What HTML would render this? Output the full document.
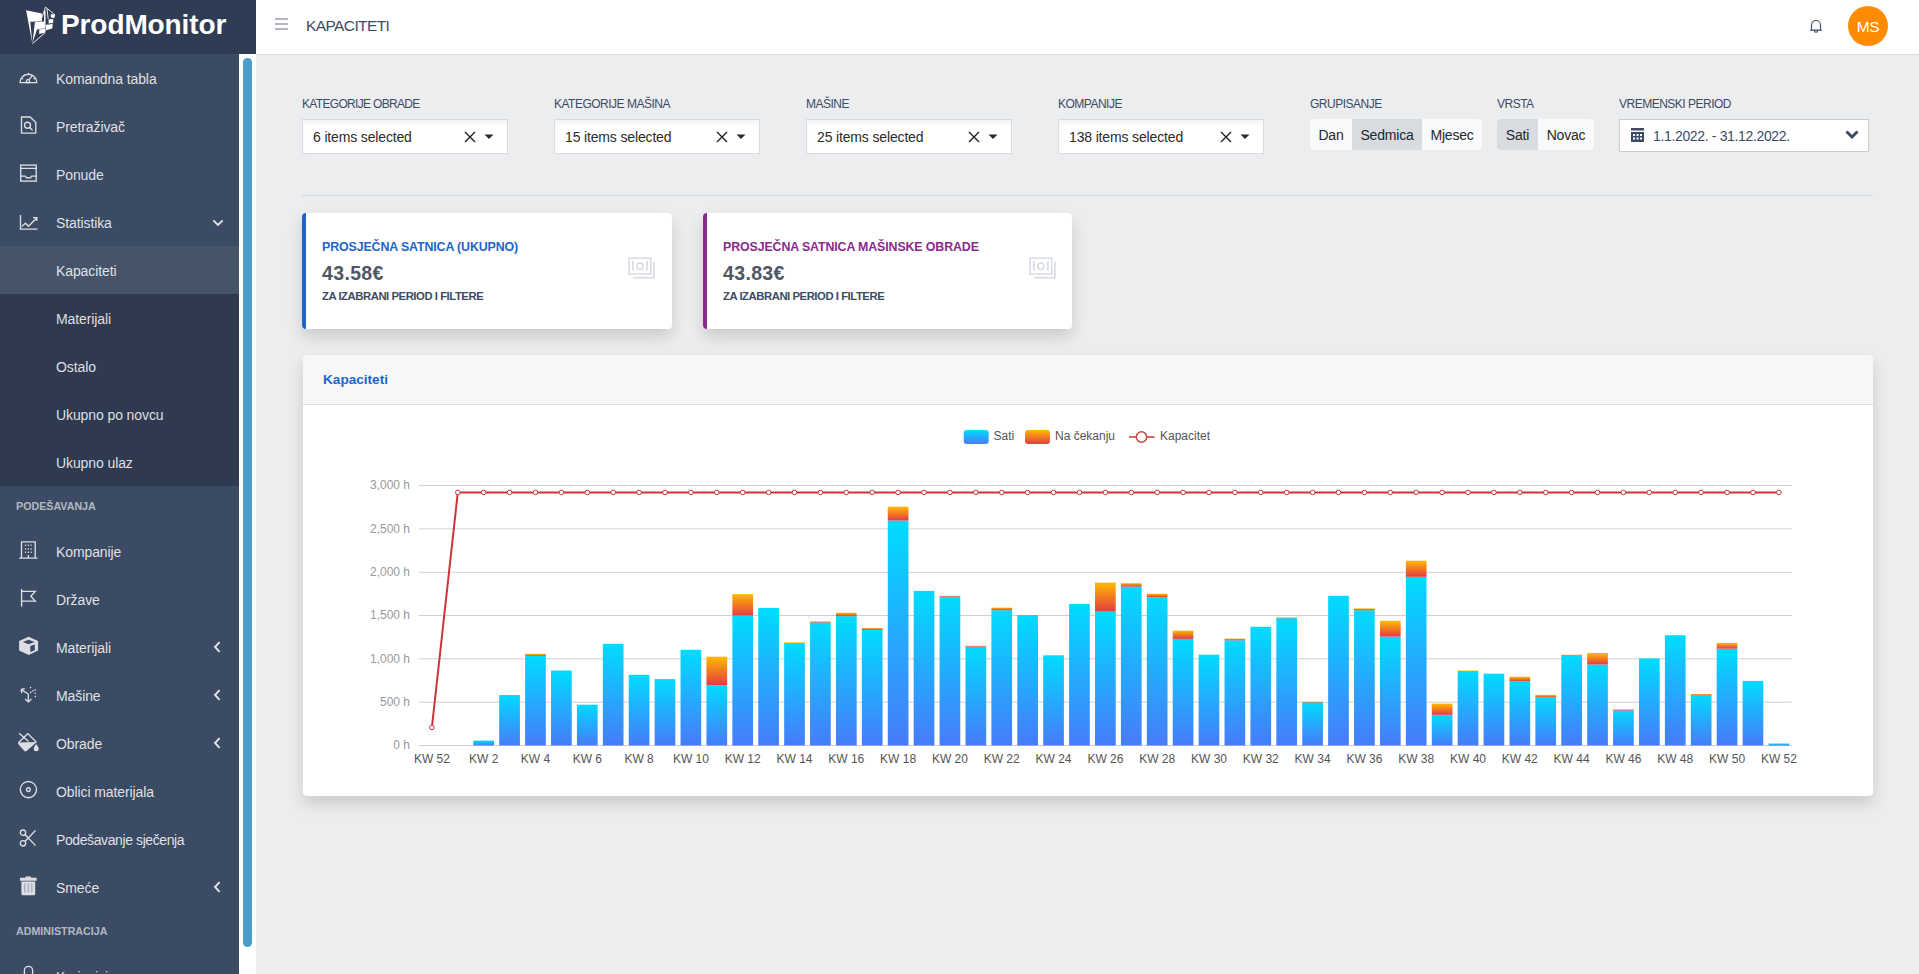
<!DOCTYPE html>
<html><head><meta charset="utf-8"><title>Kapaciteti</title>
<style>
*{box-sizing:border-box;margin:0;padding:0}
html,body{width:1919px;height:974px;overflow:hidden;background:#ebedef;font-family:"Liberation Sans", sans-serif;color:#3c4b64}
.abs{position:absolute}
#brand{position:absolute;left:0;top:0;width:256px;height:54px;background:#303c54}
#brand .name{position:absolute;left:61px;top:5px;font-size:28px;font-weight:bold;color:#fff;letter-spacing:-0.1px;line-height:40px}
#header{position:absolute;left:256px;top:0;width:1663px;height:55px;background:#fff;border-bottom:1px solid #d8dbe0}
#sidebar{position:absolute;left:0;top:54px;width:239px;height:920px;background:#3c4b64;overflow:hidden}
#sidebar .it{position:absolute;left:0;width:239px;height:48px}
#sidebar .it.act{background:#465469}
#sidebar .tx{position:absolute;left:56px;top:17px;font-size:14px;line-height:16px;color:rgba(255,255,255,.85);letter-spacing:-0.1px;white-space:nowrap}
#sidebar .ico{position:absolute;left:16px;top:12px;width:24px;height:22px}
#sidebar .ico svg{display:block}
#sidebar .chl{position:absolute;left:213px;top:18px}
#sidebar .chd{position:absolute;left:212px;top:20.5px}
#sidebar .ttl{position:absolute;left:16px;height:41px;font-size:10.7px;font-weight:bold;color:rgba(255,255,255,.62);line-height:12px;padding-top:14px}
#sbtrack{position:absolute;left:239px;top:54px;width:17px;height:920px;background:#fff}
#sbthumb{position:absolute;left:243px;top:58px;width:9px;height:889px;border-radius:5px;background:#4a9dc9}
.lbl{position:absolute;top:97px;font-size:12px;line-height:14px;letter-spacing:-0.5px;color:#3c4b64;white-space:nowrap}
.sel{position:absolute;top:119px;width:206px;height:35px;background:#fff;border:1px solid #d8dbe0;box-shadow:inset 0 4px 4px -1px rgba(0,0,0,.05)}
.stx{position:absolute;left:10px;top:9px;font-size:14px;line-height:16px;color:#2b2b2b;letter-spacing:-0.15px;white-space:nowrap}
.xic{position:absolute;left:161px;top:11px}
.car{position:absolute;left:181px;top:14px}
.bg{position:absolute;top:119px;height:31px;background:#f9fafb;border-radius:4px;overflow:hidden}
.bg span{position:absolute;top:0;height:31px;line-height:33px;font-size:14px;color:#23282c;text-align:center;letter-spacing:-0.2px}
.bg span.on{background:#d8dbe0}
.card{position:absolute;top:213px;width:370px;height:116px;background:#fff;border-radius:4px;box-shadow:0 8px 16px rgba(0,0,0,.15)}
.card .bar{position:absolute;left:0;top:0;width:4px;height:116px;border-radius:4px 0 0 4px}
.card .t{position:absolute;left:20px;top:27px;font-size:12.4px;font-weight:bold;line-height:14px;letter-spacing:-0.12px;white-space:nowrap}
.card .v{position:absolute;left:20px;top:49px;font-size:19.5px;font-weight:bold;line-height:22px;color:#4f5664;letter-spacing:0.35px;white-space:nowrap}
.card .s{position:absolute;left:20px;top:76px;font-size:11.3px;font-weight:bold;line-height:14px;color:#3c4b64;letter-spacing:-0.45px;white-space:nowrap}
.card .m{position:absolute;left:326px;top:44px}
#chartcard{position:absolute;left:303px;top:355px;width:1570px;height:441px;background:#fff;border-radius:4px;box-shadow:0 8px 16px rgba(0,0,0,.15);overflow:hidden}
#chartcard .hd{position:absolute;left:0;top:0;width:1570px;height:50px;background:#f7f7f7;border-bottom:1px solid #d8dbe0}
#chartcard .hd span{position:absolute;left:20px;top:17px;font-size:13.6px;font-weight:bold;color:#1d65c8;line-height:16px}
#chartcard .body{position:absolute;left:0;top:49px;width:1570px;height:392px}
svg text{font-family:"Liberation Sans", sans-serif}
</style></head><body>
<div id="brand">
<svg class="abs" style="left:22px;top:4px" width="36" height="44" viewBox="0 0 36 44">
<g fill="#fff">
<path d="M4.1 6.3 L19.9 9.5 L19.9 17.2 L8.3 17.8 L10.4 39.7 Z"/>
<path d="M12.9 18 L22.6 17.6 L22.6 24.2 L15 25.6 L10.6 38.5 Z"/>
<path d="M17.2 25.6 L23.5 24.6 L23.5 28.6 L17.2 30 Z"/>
<path d="M23.9 20.8 L30.7 19.9 L30.3 24.4 L23.9 26.2 Z"/>
<path d="M26.6 15.4 L31.2 14.9 L31.2 19 L26.6 19.4 Z"/>
<path d="M28.9 9.9 L33 10.8 L32.5 14 L28.9 13.5 Z"/>
<path d="M22.1 6.8 L23.5 6.8 L23.5 24.2 L22.1 24.2 Z"/>
</g>
<path d="M19.9 13.5 L23.5 3.2 L33 10.8 M25 5 L26.2 15 M23 28.8 L10.4 39.7" stroke="#fff" stroke-width="0.9" fill="none"/>
</svg>
<div class="name">ProdMonitor</div>
</div>
<div id="header">
<svg class="abs" style="left:19px;top:18px" width="13" height="13" viewBox="0 0 13 13"><path d="M0 1 H13 M0 6 H13 M0 11 H13" stroke="#b4b6c4" stroke-width="2"/></svg>
<div class="abs" style="left:50px;top:17px;font-size:15.5px;line-height:18px;letter-spacing:-0.6px;color:#3c4b64">KAPACITETI</div>
<svg class="abs" style="left:1553px;top:18px" width="14" height="16" viewBox="0 0 14 16"><path d="M2.5 12 V7 A4.5 4.5 0 0 1 11.5 7 V12 Z M1 12.3 H13" fill="none" stroke="#3c4b64" stroke-width="1.1"/><path d="M5.3 12.5 A1.7 1.7 0 0 0 8.7 12.5" fill="none" stroke="#3c4b64" stroke-width="1.1"/></svg>
<div class="abs" style="left:1592px;top:6px;width:40px;height:40px;border-radius:50%;background:#ff8c00;color:#fff;font-size:15.5px;line-height:42px;text-align:center;letter-spacing:-0.3px">MS</div>
</div>
<div id="sidebar">
<div style="position:absolute;left:0;top:-54px;width:239px;height:974px">
<div class="it" style="top:54px"><span class="ico"><svg width="24" height="22" viewBox="0 0 24 22"><path d="M4 16.6 A8.4 8.4 0 1 1 20.8 16.6 Z" fill="none" stroke="rgba(255,255,255,.82)" stroke-width="1.35" stroke-linejoin="round"/><circle cx="11.9" cy="15.2" r="1.6" fill="none" stroke="rgba(255,255,255,.82)" stroke-width="1.35"/><path d="M12.8 13.9 L16.2 9.6" fill="none" stroke="rgba(255,255,255,.82)" stroke-width="1.35"/><g fill="rgba(255,255,255,.82)"><circle cx="6.6" cy="12.8" r=".75"/><circle cx="8.2" cy="9.3" r=".75"/><circle cx="12.4" cy="7.5" r=".75"/><circle cx="18.2" cy="12.8" r=".75"/></g></svg></span><span class="tx">Komandna tabla</span></div>
<div class="it" style="top:102px"><span class="ico"><svg width="24" height="22" viewBox="0 0 24 22"><path d="M5.5 3 H14.2 L19.8 8.6 V19.1 H5.5 Z" fill="none" stroke="rgba(255,255,255,.82)" stroke-width="1.35" stroke-linejoin="round"/><circle cx="11.5" cy="11.2" r="3" fill="none" stroke="rgba(255,255,255,.82)" stroke-width="1.35"/><path d="M13.7 13.4 L16.6 16.3" fill="none" stroke="rgba(255,255,255,.82)" stroke-width="1.35"/></svg></span><span class="tx">Pretraživač</span></div>
<div class="it" style="top:150px"><span class="ico"><svg width="24" height="22" viewBox="0 0 24 22"><rect x="4.7" y="3.1" width="15.5" height="16" fill="none" stroke="rgba(255,255,255,.82)" stroke-width="1.35"/><path d="M4.7 6.3 H20.2 M4.7 14.1 H9.2 L10.4 15.7 H14.5 L15.7 14.1 H20.2" fill="none" stroke="rgba(255,255,255,.82)" stroke-width="1.35"/></svg></span><span class="tx">Ponude</span></div>
<div class="it" style="top:198px"><span class="ico"><svg width="24" height="22" viewBox="0 0 24 22"><path d="M4.5 5.1 V19.1 H21.5" fill="none" stroke="rgba(255,255,255,.82)" stroke-width="1.35"/><path d="M5.8 16.4 L9.4 13.2 L12.5 16.3 L20.4 8.3 M17 7.6 H20.8 V11.1" fill="none" stroke="rgba(255,255,255,.82)" stroke-width="1.35"/></svg></span><span class="tx">Statistika</span><svg class="chd" width="12" height="8" viewBox="0 0 12 8"><path d="M1.3 1.3 L6 6 L10.7 1.3" fill="none" stroke="rgba(255,255,255,.85)" stroke-width="1.9"/></svg></div>
<div style="position:absolute;left:0;top:246px;width:239px;height:240px;background:#2f3a50"></div>
<div class="it act" style="top:246px"><span class="tx">Kapaciteti</span></div>
<div class="it" style="top:294px"><span class="tx">Materijali</span></div>
<div class="it" style="top:342px"><span class="tx">Ostalo</span></div>
<div class="it" style="top:390px"><span class="tx">Ukupno po novcu</span></div>
<div class="it" style="top:438px"><span class="tx">Ukupno ulaz</span></div>
<div class="ttl" style="top:486px">PODEŠAVANJA</div>
<div class="it" style="top:527px"><span class="ico"><svg width="24" height="22" viewBox="0 0 24 22"><path d="M5.5 19 V2.8 H19.2 V19 M3.1 19.1 H21.5" fill="none" stroke="rgba(255,255,255,.82)" stroke-width="1.35"/><g fill="rgba(255,255,255,.82)"><rect x="8.9" y="5.6" width="1.3" height="1.3"/><rect x="11.7" y="5.6" width="1.3" height="1.3"/><rect x="14.5" y="5.6" width="1.3" height="1.3"/><rect x="8.9" y="9.3" width="1.3" height="1.3"/><rect x="11.7" y="9.3" width="1.3" height="1.3"/><rect x="14.5" y="9.3" width="1.3" height="1.3"/><rect x="8.9" y="12.6" width="1.3" height="1.3"/><rect x="11.7" y="12.6" width="1.3" height="1.3"/><rect x="14.5" y="12.6" width="1.3" height="1.3"/><rect x="11.7" y="16" width="1.3" height="3"/></g></svg></span><span class="tx">Kompanije</span></div>
<div class="it" style="top:575px"><span class="ico"><svg width="24" height="22" viewBox="0 0 24 22"><path d="M5.6 2.1 V19.6" fill="none" stroke="rgba(255,255,255,.82)" stroke-width="1.35"/><path d="M5.6 4.4 H19.3 L14.8 9.3 L19.3 14.1 H5.6" fill="none" stroke="rgba(255,255,255,.82)" stroke-width="1.35"/></svg></span><span class="tx">Države</span></div>
<div class="it" style="top:623px"><span class="ico"><svg width="24" height="22" viewBox="0 0 24 22"><path d="M12.6 1.8 L22.1 6 V15.6 L12.6 20 L3.1 15.6 V6 Z" fill="rgba(255,255,255,.82)"/><path d="M12.6 4.8 L18.6 7.1 L12.6 9.2 L6.8 7.1 Z" fill="#3c4b64"/><path d="M14.3 11 L18.8 9.6 V15.3 L14.3 17 Z" fill="#3c4b64"/></svg></span><span class="tx">Materijali</span><svg class="chl" width="8" height="12" viewBox="0 0 8 12"><path d="M6.6 1.2 L2 6 L6.6 10.8" fill="none" stroke="rgba(255,255,255,.85)" stroke-width="1.9"/></svg></div>
<div class="it" style="top:671px"><span class="ico"><svg width="24" height="22" viewBox="0 0 24 22"><path d="M12.3 11 L5.3 6.6 M5 6.5 L8.8 5.6 M5 6.5 L5.9 10.2 M12.3 11 V18.6 M9.2 16.1 L12.3 18.9 L15.4 16.1" fill="none" stroke="rgba(255,255,255,.82)" stroke-width="1.35"/><g fill="rgba(255,255,255,.82)"><circle cx="14.8" cy="9.4" r=".8"/><circle cx="16.9" cy="7.9" r=".8"/><circle cx="14.6" cy="4.6" r=".8"/><circle cx="19.1" cy="6.9" r=".8"/><circle cx="19.3" cy="10.3" r=".8"/><circle cx="19.3" cy="13.6" r=".8"/></g></svg></span><span class="tx">Mašine</span><svg class="chl" width="8" height="12" viewBox="0 0 8 12"><path d="M6.6 1.2 L2 6 L6.6 10.8" fill="none" stroke="rgba(255,255,255,.85)" stroke-width="1.9"/></svg></div>
<div class="it" style="top:719px"><span class="ico"><svg width="24" height="22" viewBox="0 0 24 22"><path d="M3.1 2.3 L12.6 10.4" fill="none" stroke="rgba(255,255,255,.82)" stroke-width="1.35" stroke-width="1.7"/><path d="M2.6 11.4 L11.9 2.6 L20.4 11.2" fill="none" stroke="rgba(255,255,255,.82)" stroke-width="1.35" stroke-width="1.7" stroke-linejoin="round"/><path d="M2.2 11.6 L20.8 11.1 L10.6 20 Q9.5 20.9 8.4 20 L2.6 13.6 Q1.6 12.5 2.2 11.6 Z" fill="rgba(255,255,255,.82)"/><path d="M20.2 12.9 Q22.7 15.9 22.7 17.7 A2.5 2.5 0 0 1 17.7 17.7 Q17.7 15.9 20.2 12.9 Z" fill="rgba(255,255,255,.82)"/></svg></span><span class="tx">Obrade</span><svg class="chl" width="8" height="12" viewBox="0 0 8 12"><path d="M6.6 1.2 L2 6 L6.6 10.8" fill="none" stroke="rgba(255,255,255,.85)" stroke-width="1.9"/></svg></div>
<div class="it" style="top:767px"><span class="ico"><svg width="24" height="22" viewBox="0 0 24 22"><circle cx="12.4" cy="10.6" r="8.1" fill="none" stroke="rgba(255,255,255,.82)" stroke-width="1.35"/><circle cx="12.4" cy="10.6" r="1.9" fill="none" stroke="rgba(255,255,255,.82)" stroke-width="1.35"/></svg></span><span class="tx">Oblici materijala</span></div>
<div class="it" style="top:815px"><span class="ico"><svg width="24" height="22" viewBox="0 0 24 22"><circle cx="7" cy="5.7" r="2.7" fill="none" stroke="rgba(255,255,255,.82)" stroke-width="1.35"/><circle cx="7" cy="16.3" r="2.7" fill="none" stroke="rgba(255,255,255,.82)" stroke-width="1.35"/><path d="M9.2 7.7 L19.6 18.6 M9.2 14.3 L19.6 3.4" fill="none" stroke="rgba(255,255,255,.82)" stroke-width="1.35"/></svg></span><span class="tx" style="letter-spacing:-0.4px">Podešavanje sječenja</span></div>
<div class="it" style="top:863px"><span class="ico"><svg width="24" height="22" viewBox="0 0 24 22"><path d="M4 2.8 H20.6 V5.8 H4 Z M9.5 1.6 H15 V3 H9.5 Z" fill="rgba(255,255,255,.82)"/><path d="M5.4 6.6 H19.2 V18.8 Q19.2 20.3 17.7 20.3 H6.9 Q5.4 20.3 5.4 18.8 Z" fill="rgba(255,255,255,.82)"/><path d="M8.7 8.6 V17.6 M12.3 8.6 V17.6 M15.8 8.6 V17.6" stroke="#9da3b4" stroke-width="1.1"/></svg></span><span class="tx">Smeće</span><svg class="chl" width="8" height="12" viewBox="0 0 8 12"><path d="M6.6 1.2 L2 6 L6.6 10.8" fill="none" stroke="rgba(255,255,255,.85)" stroke-width="1.9"/></svg></div>
<div class="ttl" style="top:911px">ADMINISTRACIJA</div>
<div class="it" style="top:952px"><span class="ico"><svg width="24" height="22" viewBox="0 0 24 22"><path d="M8.4 22 V6.4 A4.1 4.1 0 0 1 16.6 6.4 V22" fill="none" stroke="rgba(255,255,255,.82)" stroke-width="1.35" stroke-width="1.6"/></svg></span><span class="tx">Korisnici</span></div>
</div>
</div>
<div id="sbtrack"></div><div id="sbthumb"></div>

<div class="lbl" style="left:302px;letter-spacing:-0.68px">KATEGORIJE OBRADE</div>
<div class="sel" style="left:302px"><span class="stx">6 items selected</span>
<svg class="xic" width="12" height="12" viewBox="0 0 12 12"><path d="M1 1 L11 11 M11 1 L1 11" stroke="#1f1f1f" stroke-width="1.4"/></svg>
<svg class="car" width="10" height="6" viewBox="0 0 10 6"><path d="M0.5 0.5 H9.5 L5 5 Z" fill="#2a2a2a"/></svg></div>
<div class="lbl" style="left:554px">KATEGORIJE MAŠINA</div>
<div class="sel" style="left:554px"><span class="stx">15 items selected</span>
<svg class="xic" width="12" height="12" viewBox="0 0 12 12"><path d="M1 1 L11 11 M11 1 L1 11" stroke="#1f1f1f" stroke-width="1.4"/></svg>
<svg class="car" width="10" height="6" viewBox="0 0 10 6"><path d="M0.5 0.5 H9.5 L5 5 Z" fill="#2a2a2a"/></svg></div>
<div class="lbl" style="left:806px">MAŠINE</div>
<div class="sel" style="left:806px"><span class="stx">25 items selected</span>
<svg class="xic" width="12" height="12" viewBox="0 0 12 12"><path d="M1 1 L11 11 M11 1 L1 11" stroke="#1f1f1f" stroke-width="1.4"/></svg>
<svg class="car" width="10" height="6" viewBox="0 0 10 6"><path d="M0.5 0.5 H9.5 L5 5 Z" fill="#2a2a2a"/></svg></div>
<div class="lbl" style="left:1058px">KOMPANIJE</div>
<div class="sel" style="left:1058px"><span class="stx">138 items selected</span>
<svg class="xic" width="12" height="12" viewBox="0 0 12 12"><path d="M1 1 L11 11 M11 1 L1 11" stroke="#1f1f1f" stroke-width="1.4"/></svg>
<svg class="car" width="10" height="6" viewBox="0 0 10 6"><path d="M0.5 0.5 H9.5 L5 5 Z" fill="#2a2a2a"/></svg></div>
<div class="lbl" style="left:1310px">GRUPISANJE</div>
<div class="bg" style="left:1310px;width:172px"><span style="left:0;width:42px">Dan</span><span class="on" style="left:42px;width:70px">Sedmica</span><span style="left:112px;width:60px">Mjesec</span></div>
<div class="lbl" style="left:1497px">VRSTA</div>
<div class="bg" style="left:1497px;width:97px"><span class="on" style="left:0;width:41px">Sati</span><span style="left:41px;width:56px">Novac</span></div>
<div class="lbl" style="left:1619px">VREMENSKI PERIOD</div>
<div class="abs" style="left:1619px;top:119px;width:250px;height:33px;background:#fff;border:1px solid #c8cbd0">
<svg class="abs" style="left:11px;top:8px" width="13" height="15" viewBox="0 0 13 15"><rect x="0" y="0" width="13" height="2.5" fill="#3c4b64"/><rect x="0" y="4" width="13" height="10" fill="#3c4b64"/><g fill="#fff"><rect x="2" y="6" width="2" height="2"/><rect x="5.5" y="6" width="2" height="2"/><rect x="9" y="6" width="2" height="2"/><rect x="2" y="9.5" width="2" height="2"/><rect x="5.5" y="9.5" width="2" height="2"/><rect x="9" y="9.5" width="2" height="2"/></g></svg>
<span class="abs" style="left:33px;top:8px;font-size:14px;line-height:16px;color:#3c4b64;letter-spacing:-0.35px;white-space:nowrap">1.1.2022. - 31.12.2022.</span>
<svg class="abs" style="left:225px;top:10px" width="14" height="10" viewBox="0 0 14 10"><path d="M1.5 1.5 L7 7 L12.5 1.5" fill="none" stroke="#3c4b64" stroke-width="3"/></svg>
</div>
<div class="abs" style="left:302px;top:195px;width:1571px;height:1px;background:#d3d6da"></div>

<div class="card" style="left:302px"><div class="bar" style="background:#1d65c8"></div>
<div class="t" style="color:#1d65c8">PROSJEČNA SATNICA (UKUPNO)</div><div class="v">43.58€</div><div class="s">ZA IZABRANI PERIOD I FILTERE</div><div class="m"><svg width="28" height="23" viewBox="0 0 28 23"><g fill="none" stroke="#d9dce6" stroke-width="1.6"><rect x="1.1" y="1.2" width="21.7" height="15.8"/><circle cx="11.9" cy="9.2" r="3.2"/><path d="M4.9 4 V13.8 M18.9 4 V13.8 M25.9 4.9 V20.7 H4.9" stroke-width="1.8"/></g></svg></div></div>
<div class="card" style="left:703px;width:369px"><div class="bar" style="background:#8a2a8c"></div>
<div class="t" style="color:#8a2a8c">PROSJEČNA SATNICA MAŠINSKE OBRADE</div><div class="v">43.83€</div><div class="s">ZA IZABRANI PERIOD I FILTERE</div><div class="m"><svg width="28" height="23" viewBox="0 0 28 23"><g fill="none" stroke="#d9dce6" stroke-width="1.6"><rect x="1.1" y="1.2" width="21.7" height="15.8"/><circle cx="11.9" cy="9.2" r="3.2"/><path d="M4.9 4 V13.8 M18.9 4 V13.8 M25.9 4.9 V20.7 H4.9" stroke-width="1.8"/></g></svg></div></div>

<div id="chartcard"><div class="hd"><span>Kapaciteti</span></div><div class="body">
<svg width="1570" height="392" viewBox="0 0 1570 392" style="position:absolute;left:0;top:0">
<defs><linearGradient id="gb" x1="0" y1="0" x2="0" y2="1"><stop offset="0" stop-color="#00dcff"/><stop offset="1" stop-color="#477bfa"/></linearGradient><linearGradient id="go" x1="0" y1="0" x2="0" y2="1"><stop offset="0" stop-color="#ffb900"/><stop offset="1" stop-color="#e43c42"/></linearGradient></defs>
<line x1="115.9" x2="1488.8" y1="81.5" y2="81.5" stroke="#d0d0d0" stroke-width="1"/>
<text x="107.0" y="85.2" text-anchor="end" font-size="12" fill="#9a9a9a">3,000 h</text>
<line x1="115.9" x2="1488.8" y1="124.9" y2="124.9" stroke="#d0d0d0" stroke-width="1"/>
<text x="107.0" y="128.6" text-anchor="end" font-size="12" fill="#9a9a9a">2,500 h</text>
<line x1="115.9" x2="1488.8" y1="168.3" y2="168.3" stroke="#d0d0d0" stroke-width="1"/>
<text x="107.0" y="172.0" text-anchor="end" font-size="12" fill="#9a9a9a">2,000 h</text>
<line x1="115.9" x2="1488.8" y1="211.5" y2="211.5" stroke="#d0d0d0" stroke-width="1"/>
<text x="107.0" y="215.2" text-anchor="end" font-size="12" fill="#9a9a9a">1,500 h</text>
<line x1="115.9" x2="1488.8" y1="254.8" y2="254.8" stroke="#d0d0d0" stroke-width="1"/>
<text x="107.0" y="258.5" text-anchor="end" font-size="12" fill="#9a9a9a">1,000 h</text>
<line x1="115.9" x2="1488.8" y1="298.2" y2="298.2" stroke="#d0d0d0" stroke-width="1"/>
<text x="107.0" y="301.9" text-anchor="end" font-size="12" fill="#9a9a9a">500 h</text>
<line x1="115.9" x2="1488.8" y1="341.5" y2="341.5" stroke="#d0d0d0" stroke-width="1"/>
<text x="107.0" y="345.2" text-anchor="end" font-size="12" fill="#9a9a9a">0 h</text>
<rect x="170.31" y="336.60" width="20.7" height="4.90" fill="url(#gb)"/>
<rect x="196.21" y="291.00" width="20.7" height="50.50" fill="url(#gb)"/>
<rect x="222.12" y="251.90" width="20.7" height="89.60" fill="url(#gb)"/>
<rect x="222.12" y="249.90" width="20.7" height="2.00" fill="url(#go)"/>
<rect x="248.02" y="266.50" width="20.7" height="75.00" fill="url(#gb)"/>
<rect x="273.93" y="300.70" width="20.7" height="40.80" fill="url(#gb)"/>
<rect x="299.83" y="239.80" width="20.7" height="101.70" fill="url(#gb)"/>
<rect x="325.73" y="270.80" width="20.7" height="70.70" fill="url(#gb)"/>
<rect x="351.64" y="275.10" width="20.7" height="66.40" fill="url(#gb)"/>
<rect x="377.54" y="245.80" width="20.7" height="95.70" fill="url(#gb)"/>
<rect x="403.45" y="281.20" width="20.7" height="60.30" fill="url(#gb)"/>
<rect x="403.45" y="252.70" width="20.7" height="28.50" fill="url(#go)"/>
<rect x="429.35" y="211.60" width="20.7" height="129.90" fill="url(#gb)"/>
<rect x="429.35" y="190.10" width="20.7" height="21.50" fill="url(#go)"/>
<rect x="455.25" y="203.90" width="20.7" height="137.60" fill="url(#gb)"/>
<rect x="481.16" y="239.20" width="20.7" height="102.30" fill="url(#gb)"/>
<rect x="481.16" y="238.40" width="20.7" height="0.80" fill="url(#go)"/>
<rect x="507.06" y="218.50" width="20.7" height="123.00" fill="url(#gb)"/>
<rect x="507.06" y="217.40" width="20.7" height="1.10" fill="url(#go)"/>
<rect x="532.97" y="212.20" width="20.7" height="129.30" fill="url(#gb)"/>
<rect x="532.97" y="208.80" width="20.7" height="3.40" fill="url(#go)"/>
<rect x="558.87" y="226.00" width="20.7" height="115.50" fill="url(#gb)"/>
<rect x="558.87" y="224.00" width="20.7" height="2.00" fill="url(#go)"/>
<rect x="584.77" y="116.50" width="20.7" height="225.00" fill="url(#gb)"/>
<rect x="584.77" y="102.70" width="20.7" height="13.80" fill="url(#go)"/>
<rect x="610.68" y="186.90" width="20.7" height="154.60" fill="url(#gb)"/>
<rect x="636.58" y="192.70" width="20.7" height="148.80" fill="url(#gb)"/>
<rect x="636.58" y="191.80" width="20.7" height="0.90" fill="url(#go)"/>
<rect x="662.49" y="242.70" width="20.7" height="98.80" fill="url(#gb)"/>
<rect x="662.49" y="241.80" width="20.7" height="0.90" fill="url(#go)"/>
<rect x="688.39" y="206.20" width="20.7" height="135.30" fill="url(#gb)"/>
<rect x="688.39" y="203.60" width="20.7" height="2.60" fill="url(#go)"/>
<rect x="714.29" y="211.60" width="20.7" height="129.90" fill="url(#gb)"/>
<rect x="714.29" y="211.10" width="20.7" height="0.50" fill="url(#go)"/>
<rect x="740.20" y="251.30" width="20.7" height="90.20" fill="url(#gb)"/>
<rect x="766.10" y="199.90" width="20.7" height="141.60" fill="url(#gb)"/>
<rect x="792.01" y="207.60" width="20.7" height="133.90" fill="url(#gb)"/>
<rect x="792.01" y="178.60" width="20.7" height="29.00" fill="url(#go)"/>
<rect x="817.91" y="182.60" width="20.7" height="158.90" fill="url(#gb)"/>
<rect x="817.91" y="179.20" width="20.7" height="3.40" fill="url(#go)"/>
<rect x="843.81" y="193.20" width="20.7" height="148.30" fill="url(#gb)"/>
<rect x="843.81" y="189.80" width="20.7" height="3.40" fill="url(#go)"/>
<rect x="869.72" y="234.90" width="20.7" height="106.60" fill="url(#gb)"/>
<rect x="869.72" y="226.60" width="20.7" height="8.30" fill="url(#go)"/>
<rect x="895.62" y="250.70" width="20.7" height="90.80" fill="url(#gb)"/>
<rect x="921.53" y="236.30" width="20.7" height="105.20" fill="url(#gb)"/>
<rect x="921.53" y="234.60" width="20.7" height="1.70" fill="url(#go)"/>
<rect x="947.43" y="222.80" width="20.7" height="118.70" fill="url(#gb)"/>
<rect x="973.33" y="214.20" width="20.7" height="127.30" fill="url(#gb)"/>
<rect x="973.33" y="213.40" width="20.7" height="0.80" fill="url(#go)"/>
<rect x="999.24" y="298.40" width="20.7" height="43.10" fill="url(#gb)"/>
<rect x="999.24" y="297.60" width="20.7" height="0.80" fill="url(#go)"/>
<rect x="1025.14" y="191.80" width="20.7" height="149.70" fill="url(#gb)"/>
<rect x="1051.05" y="206.20" width="20.7" height="135.30" fill="url(#gb)"/>
<rect x="1051.05" y="204.40" width="20.7" height="1.80" fill="url(#go)"/>
<rect x="1076.95" y="232.60" width="20.7" height="108.90" fill="url(#gb)"/>
<rect x="1076.95" y="216.80" width="20.7" height="15.80" fill="url(#go)"/>
<rect x="1102.85" y="172.80" width="20.7" height="168.70" fill="url(#gb)"/>
<rect x="1102.85" y="156.70" width="20.7" height="16.10" fill="url(#go)"/>
<rect x="1128.76" y="310.80" width="20.7" height="30.70" fill="url(#gb)"/>
<rect x="1128.76" y="299.60" width="20.7" height="11.20" fill="url(#go)"/>
<rect x="1154.66" y="267.40" width="20.7" height="74.10" fill="url(#gb)"/>
<rect x="1154.66" y="266.50" width="20.7" height="0.90" fill="url(#go)"/>
<rect x="1180.57" y="269.70" width="20.7" height="71.80" fill="url(#gb)"/>
<rect x="1206.47" y="277.20" width="20.7" height="64.30" fill="url(#gb)"/>
<rect x="1206.47" y="272.80" width="20.7" height="4.40" fill="url(#go)"/>
<rect x="1232.37" y="293.50" width="20.7" height="48.00" fill="url(#gb)"/>
<rect x="1232.37" y="290.90" width="20.7" height="2.60" fill="url(#go)"/>
<rect x="1258.28" y="251.60" width="20.7" height="89.90" fill="url(#gb)"/>
<rect x="1258.28" y="250.70" width="20.7" height="0.90" fill="url(#go)"/>
<rect x="1284.18" y="260.50" width="20.7" height="81.00" fill="url(#gb)"/>
<rect x="1284.18" y="249.00" width="20.7" height="11.50" fill="url(#go)"/>
<rect x="1310.09" y="306.50" width="20.7" height="35.00" fill="url(#gb)"/>
<rect x="1310.09" y="305.30" width="20.7" height="1.20" fill="url(#go)"/>
<rect x="1335.99" y="254.40" width="20.7" height="87.10" fill="url(#gb)"/>
<rect x="1361.89" y="231.20" width="20.7" height="110.30" fill="url(#gb)"/>
<rect x="1387.80" y="291.00" width="20.7" height="50.50" fill="url(#gb)"/>
<rect x="1387.80" y="290.10" width="20.7" height="0.90" fill="url(#go)"/>
<rect x="1413.70" y="244.70" width="20.7" height="96.80" fill="url(#gb)"/>
<rect x="1413.70" y="238.90" width="20.7" height="5.80" fill="url(#go)"/>
<rect x="1439.61" y="276.90" width="20.7" height="64.60" fill="url(#gb)"/>
<rect x="1465.51" y="339.50" width="20.7" height="2.00" fill="url(#gb)"/>
<polyline fill="none" stroke="#c8363a" stroke-width="2" points="128.9,323.4 154.8,88.4 180.7,88.4 206.6,88.4 232.5,88.4 258.4,88.4 284.3,88.4 310.2,88.4 336.1,88.4 362.0,88.4 387.9,88.4 413.8,88.4 439.7,88.4 465.6,88.4 491.5,88.4 517.4,88.4 543.3,88.4 569.2,88.4 595.1,88.4 621.0,88.4 646.9,88.4 672.8,88.4 698.7,88.4 724.6,88.4 750.5,88.4 776.5,88.4 802.4,88.4 828.3,88.4 854.2,88.4 880.1,88.4 906.0,88.4 931.9,88.4 957.8,88.4 983.7,88.4 1009.6,88.4 1035.5,88.4 1061.4,88.4 1087.3,88.4 1113.2,88.4 1139.1,88.4 1165.0,88.4 1190.9,88.4 1216.8,88.4 1242.7,88.4 1268.6,88.4 1294.5,88.4 1320.4,88.4 1346.3,88.4 1372.2,88.4 1398.1,88.4 1424.1,88.4 1450.0,88.4 1475.9,88.4"/>
<circle cx="128.9" cy="323.4" r="2.3" fill="#fff" stroke="#c8363a" stroke-width="1"/>
<circle cx="154.8" cy="88.4" r="2.3" fill="#fff" stroke="#c8363a" stroke-width="1"/>
<circle cx="180.7" cy="88.4" r="2.3" fill="#fff" stroke="#c8363a" stroke-width="1"/>
<circle cx="206.6" cy="88.4" r="2.3" fill="#fff" stroke="#c8363a" stroke-width="1"/>
<circle cx="232.5" cy="88.4" r="2.3" fill="#fff" stroke="#c8363a" stroke-width="1"/>
<circle cx="258.4" cy="88.4" r="2.3" fill="#fff" stroke="#c8363a" stroke-width="1"/>
<circle cx="284.3" cy="88.4" r="2.3" fill="#fff" stroke="#c8363a" stroke-width="1"/>
<circle cx="310.2" cy="88.4" r="2.3" fill="#fff" stroke="#c8363a" stroke-width="1"/>
<circle cx="336.1" cy="88.4" r="2.3" fill="#fff" stroke="#c8363a" stroke-width="1"/>
<circle cx="362.0" cy="88.4" r="2.3" fill="#fff" stroke="#c8363a" stroke-width="1"/>
<circle cx="387.9" cy="88.4" r="2.3" fill="#fff" stroke="#c8363a" stroke-width="1"/>
<circle cx="413.8" cy="88.4" r="2.3" fill="#fff" stroke="#c8363a" stroke-width="1"/>
<circle cx="439.7" cy="88.4" r="2.3" fill="#fff" stroke="#c8363a" stroke-width="1"/>
<circle cx="465.6" cy="88.4" r="2.3" fill="#fff" stroke="#c8363a" stroke-width="1"/>
<circle cx="491.5" cy="88.4" r="2.3" fill="#fff" stroke="#c8363a" stroke-width="1"/>
<circle cx="517.4" cy="88.4" r="2.3" fill="#fff" stroke="#c8363a" stroke-width="1"/>
<circle cx="543.3" cy="88.4" r="2.3" fill="#fff" stroke="#c8363a" stroke-width="1"/>
<circle cx="569.2" cy="88.4" r="2.3" fill="#fff" stroke="#c8363a" stroke-width="1"/>
<circle cx="595.1" cy="88.4" r="2.3" fill="#fff" stroke="#c8363a" stroke-width="1"/>
<circle cx="621.0" cy="88.4" r="2.3" fill="#fff" stroke="#c8363a" stroke-width="1"/>
<circle cx="646.9" cy="88.4" r="2.3" fill="#fff" stroke="#c8363a" stroke-width="1"/>
<circle cx="672.8" cy="88.4" r="2.3" fill="#fff" stroke="#c8363a" stroke-width="1"/>
<circle cx="698.7" cy="88.4" r="2.3" fill="#fff" stroke="#c8363a" stroke-width="1"/>
<circle cx="724.6" cy="88.4" r="2.3" fill="#fff" stroke="#c8363a" stroke-width="1"/>
<circle cx="750.5" cy="88.4" r="2.3" fill="#fff" stroke="#c8363a" stroke-width="1"/>
<circle cx="776.5" cy="88.4" r="2.3" fill="#fff" stroke="#c8363a" stroke-width="1"/>
<circle cx="802.4" cy="88.4" r="2.3" fill="#fff" stroke="#c8363a" stroke-width="1"/>
<circle cx="828.3" cy="88.4" r="2.3" fill="#fff" stroke="#c8363a" stroke-width="1"/>
<circle cx="854.2" cy="88.4" r="2.3" fill="#fff" stroke="#c8363a" stroke-width="1"/>
<circle cx="880.1" cy="88.4" r="2.3" fill="#fff" stroke="#c8363a" stroke-width="1"/>
<circle cx="906.0" cy="88.4" r="2.3" fill="#fff" stroke="#c8363a" stroke-width="1"/>
<circle cx="931.9" cy="88.4" r="2.3" fill="#fff" stroke="#c8363a" stroke-width="1"/>
<circle cx="957.8" cy="88.4" r="2.3" fill="#fff" stroke="#c8363a" stroke-width="1"/>
<circle cx="983.7" cy="88.4" r="2.3" fill="#fff" stroke="#c8363a" stroke-width="1"/>
<circle cx="1009.6" cy="88.4" r="2.3" fill="#fff" stroke="#c8363a" stroke-width="1"/>
<circle cx="1035.5" cy="88.4" r="2.3" fill="#fff" stroke="#c8363a" stroke-width="1"/>
<circle cx="1061.4" cy="88.4" r="2.3" fill="#fff" stroke="#c8363a" stroke-width="1"/>
<circle cx="1087.3" cy="88.4" r="2.3" fill="#fff" stroke="#c8363a" stroke-width="1"/>
<circle cx="1113.2" cy="88.4" r="2.3" fill="#fff" stroke="#c8363a" stroke-width="1"/>
<circle cx="1139.1" cy="88.4" r="2.3" fill="#fff" stroke="#c8363a" stroke-width="1"/>
<circle cx="1165.0" cy="88.4" r="2.3" fill="#fff" stroke="#c8363a" stroke-width="1"/>
<circle cx="1190.9" cy="88.4" r="2.3" fill="#fff" stroke="#c8363a" stroke-width="1"/>
<circle cx="1216.8" cy="88.4" r="2.3" fill="#fff" stroke="#c8363a" stroke-width="1"/>
<circle cx="1242.7" cy="88.4" r="2.3" fill="#fff" stroke="#c8363a" stroke-width="1"/>
<circle cx="1268.6" cy="88.4" r="2.3" fill="#fff" stroke="#c8363a" stroke-width="1"/>
<circle cx="1294.5" cy="88.4" r="2.3" fill="#fff" stroke="#c8363a" stroke-width="1"/>
<circle cx="1320.4" cy="88.4" r="2.3" fill="#fff" stroke="#c8363a" stroke-width="1"/>
<circle cx="1346.3" cy="88.4" r="2.3" fill="#fff" stroke="#c8363a" stroke-width="1"/>
<circle cx="1372.2" cy="88.4" r="2.3" fill="#fff" stroke="#c8363a" stroke-width="1"/>
<circle cx="1398.1" cy="88.4" r="2.3" fill="#fff" stroke="#c8363a" stroke-width="1"/>
<circle cx="1424.1" cy="88.4" r="2.3" fill="#fff" stroke="#c8363a" stroke-width="1"/>
<circle cx="1450.0" cy="88.4" r="2.3" fill="#fff" stroke="#c8363a" stroke-width="1"/>
<circle cx="1475.9" cy="88.4" r="2.3" fill="#fff" stroke="#c8363a" stroke-width="1"/>
<text x="128.9" y="359.0" text-anchor="middle" font-size="12" fill="#555">KW 52</text>
<text x="180.7" y="359.0" text-anchor="middle" font-size="12" fill="#555">KW 2</text>
<text x="232.5" y="359.0" text-anchor="middle" font-size="12" fill="#555">KW 4</text>
<text x="284.3" y="359.0" text-anchor="middle" font-size="12" fill="#555">KW 6</text>
<text x="336.1" y="359.0" text-anchor="middle" font-size="12" fill="#555">KW 8</text>
<text x="387.9" y="359.0" text-anchor="middle" font-size="12" fill="#555">KW 10</text>
<text x="439.7" y="359.0" text-anchor="middle" font-size="12" fill="#555">KW 12</text>
<text x="491.5" y="359.0" text-anchor="middle" font-size="12" fill="#555">KW 14</text>
<text x="543.3" y="359.0" text-anchor="middle" font-size="12" fill="#555">KW 16</text>
<text x="595.1" y="359.0" text-anchor="middle" font-size="12" fill="#555">KW 18</text>
<text x="646.9" y="359.0" text-anchor="middle" font-size="12" fill="#555">KW 20</text>
<text x="698.7" y="359.0" text-anchor="middle" font-size="12" fill="#555">KW 22</text>
<text x="750.5" y="359.0" text-anchor="middle" font-size="12" fill="#555">KW 24</text>
<text x="802.4" y="359.0" text-anchor="middle" font-size="12" fill="#555">KW 26</text>
<text x="854.2" y="359.0" text-anchor="middle" font-size="12" fill="#555">KW 28</text>
<text x="906.0" y="359.0" text-anchor="middle" font-size="12" fill="#555">KW 30</text>
<text x="957.8" y="359.0" text-anchor="middle" font-size="12" fill="#555">KW 32</text>
<text x="1009.6" y="359.0" text-anchor="middle" font-size="12" fill="#555">KW 34</text>
<text x="1061.4" y="359.0" text-anchor="middle" font-size="12" fill="#555">KW 36</text>
<text x="1113.2" y="359.0" text-anchor="middle" font-size="12" fill="#555">KW 38</text>
<text x="1165.0" y="359.0" text-anchor="middle" font-size="12" fill="#555">KW 40</text>
<text x="1216.8" y="359.0" text-anchor="middle" font-size="12" fill="#555">KW 42</text>
<text x="1268.6" y="359.0" text-anchor="middle" font-size="12" fill="#555">KW 44</text>
<text x="1320.4" y="359.0" text-anchor="middle" font-size="12" fill="#555">KW 46</text>
<text x="1372.2" y="359.0" text-anchor="middle" font-size="12" fill="#555">KW 48</text>
<text x="1424.1" y="359.0" text-anchor="middle" font-size="12" fill="#555">KW 50</text>
<text x="1475.9" y="359.0" text-anchor="middle" font-size="12" fill="#555">KW 52</text>
<rect x="660.7" y="26.0" width="25" height="14" rx="3" fill="url(#gb)"/>
<text x="690.5" y="36.0" font-size="12" fill="#555">Sati</text>
<rect x="722.0" y="26.0" width="25" height="14" rx="3" fill="url(#go)"/>
<text x="752.0" y="36.0" font-size="12" fill="#555">Na čekanju</text>
<line x1="826.0" x2="851.5" y1="33.0" y2="33.0" stroke="#d46a6c" stroke-width="2"/>
<circle cx="838.5" cy="33.0" r="5.2" fill="#fff" stroke="#cf4a4d" stroke-width="1.6"/>
<text x="857.0" y="36.0" font-size="12" fill="#555">Kapacitet</text>
</svg>
</div></div>
</body></html>
